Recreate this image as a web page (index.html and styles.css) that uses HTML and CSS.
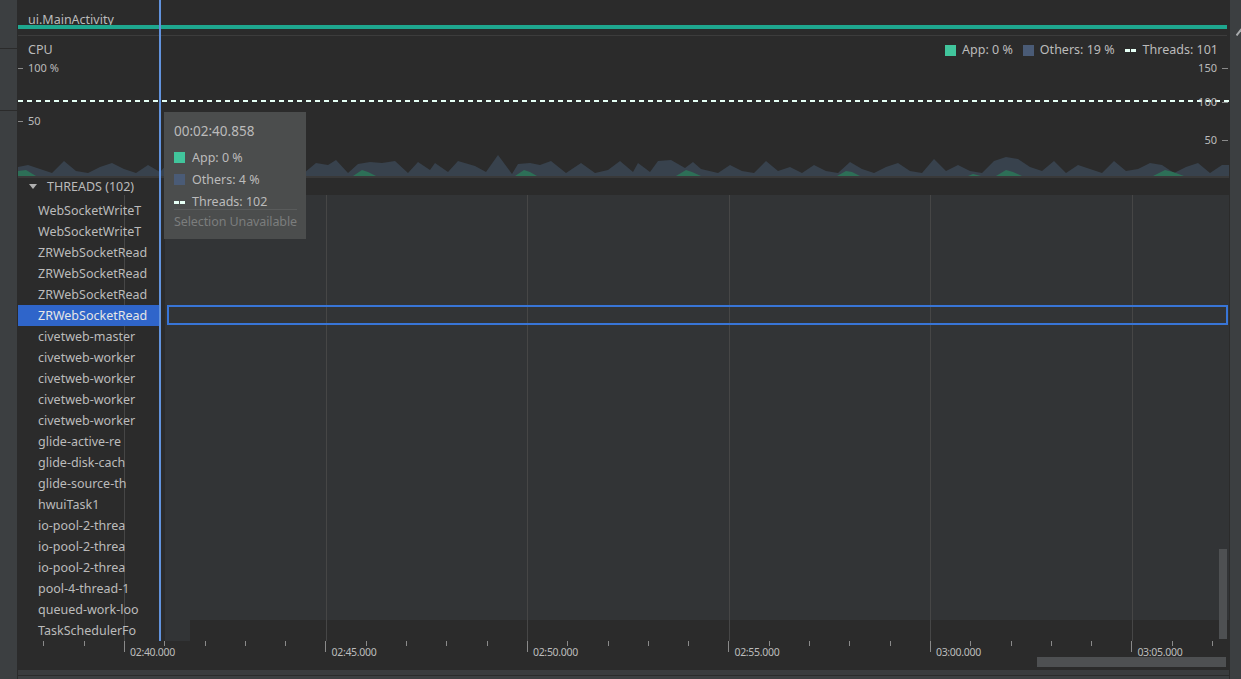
FILE: index.html
```html
<!DOCTYPE html>
<html>
<head>
<meta charset="utf-8">
<link rel="stylesheet" href="styles.css">
</head>
<body>
<div class="app">
  <aside class="strip-left"><div class="sl-a"></div><div class="sl-b"></div></aside>
  <main class="main">
    <div class="title">ui.MainActivity</div>
    <div class="teal"></div>
    <div class="sep"></div>
    <section class="cpu">
      <div class="cpu-head">
        <span>CPU</span>
        <div class="legend">
          <span class="lg"><i class="sw app"></i>App: 0 %</span>
          <span class="lg"><i class="sw others"></i>Others: 19 %</span>
          <span class="lg"><i class="dash"></i>Threads: 101</span>
        </div>
      </div>
      <div class="yl yl-left y100"><i class="tk"></i>100 %</div>
      <div class="yl yl-left y50"><i class="tk"></i>50</div>
      <div class="dashed"></div>
      <div class="yl yl-right r150">150<i class="tk"></i></div>
      <div class="yl yl-right r100">100<i class="tk"></i></div>
      <div class="yl yl-right r50">50<i class="tk"></i></div>
      <svg class="chart" viewBox="0 0 1211 26" preserveAspectRatio="none">
        <polygon fill="#38424d" points="0,26 0,17 10,15 22,19 34,23 46,11 58,21 70,23 82,17 94,13 106,19 118,23 130,15 142,22 152,11 164,21 176,23 190,9 202,21 214,19 226,13 238,23 250,17 262,15 274,20 286,23 298,13 310,15 318,10 330,23 340,14 352,12 364,13 377,11 390,23 400,12 412,20 417,13 430,22 440,11 457,16 468,22 480,5 494,24 500,14 512,13 522,15 533,11 548,23 563,13 577,23 590,20 602,11 615,22 620,13 632,22 640,11 653,10 667,18 675,12 683,19 700,23 712,15 724,21 736,23 748,11 760,21 772,17 784,23 796,15 808,21 820,23 832,12 844,19 856,23 868,17 880,13 892,21 904,23 916,9 928,21 940,15 952,21 964,23 976,11 988,7 1000,9 1012,17 1024,21 1036,11 1048,23 1060,15 1072,19 1084,23 1096,11 1108,21 1120,19 1132,13 1144,15 1156,23 1168,17 1180,13 1192,23 1204,15 1211,15 1211,26"/>
        <g fill="#2d6f57">
          <polygon points="0,26 0,21 8,20 18,26"/>
          <polygon points="335,26 344,20 350,22 358,26"/>
          <polygon points="497,26 506,20 512,22 519,26"/>
          <polygon points="658,26 668,20 674,22 683,26"/>
          <polygon points="819,26 828,21 834,22 842,26"/>
          <polygon points="950,26 955,24 963,26"/>
          <polygon points="978,26 988,20 995,22 1004,26"/>
          <polygon points="1135,26 1147,20 1155,22 1166,26"/>
        </g>
      </svg>
    </section>
    <div class="band"></div>
    <div class="threads-head"><span class="tri"></span>THREADS (102)</div>
    <div class="thread-body">
      <div class="grid">
        <div class="gcell"></div><div class="gcell"></div><div class="gcell"></div>
        <div class="gcell"></div><div class="gcell"></div><div class="gcell"></div>
      </div>
      <ul class="list">
        <li>WebSocketWriteT</li>
        <li>WebSocketWriteT</li>
        <li>ZRWebSocketRead</li>
        <li>ZRWebSocketRead</li>
        <li>ZRWebSocketRead</li>
        <li class="sel">ZRWebSocketRead</li>
        <li>civetweb-master</li>
        <li>civetweb-worker</li>
        <li>civetweb-worker</li>
        <li>civetweb-worker</li>
        <li>civetweb-worker</li>
        <li>glide-active-re</li>
        <li>glide-disk-cach</li>
        <li>glide-source-th</li>
        <li>hwuiTask1</li>
        <li>io-pool-2-threa</li>
        <li>io-pool-2-threa</li>
        <li>io-pool-2-threa</li>
        <li>pool-4-thread-1</li>
        <li>queued-work-loo</li>
        <li>TaskSchedulerFo</li>
      </ul>
      <div class="tracks">
        <div class="track-bg"><div class="sel-outline"></div></div>
        <div class="track-stub"></div>
      </div>
      <div class="vthumb"></div>
    </div>
    <div class="axis">
      <div class="ticks">
        <i class="t"></i><i class="t"></i><i class="t major"><span>02:40.000</span></i><i class="t"></i><i class="t"></i>
        <i class="t"></i><i class="t"></i><i class="t major"><span>02:45.000</span></i><i class="t"></i><i class="t"></i>
        <i class="t"></i><i class="t"></i><i class="t major"><span>02:50.000</span></i><i class="t"></i><i class="t"></i>
        <i class="t"></i><i class="t"></i><i class="t major"><span>02:55.000</span></i><i class="t"></i><i class="t"></i>
        <i class="t"></i><i class="t"></i><i class="t major"><span>03:00.000</span></i><i class="t"></i><i class="t"></i>
        <i class="t"></i><i class="t"></i><i class="t major"><span>03:05.000</span></i><i class="t"></i><i class="t"></i>
      </div>
      <div class="hscroll"><div class="hthumb"></div></div>
    </div>
    <div class="bottom"></div>
    <div class="cursor"></div>
    <div class="tooltip">
      <div class="tt-time">00:02:40.858</div>
      <div class="tt-row"><i class="sw app"></i>App: 0 %</div>
      <div class="tt-row"><i class="sw others"></i>Others: 4 %</div>
      <div class="tt-row tt-threads"><i class="dash"></i>Threads: 102</div>
      <div class="tt-note">Selection Unavailable</div>
    </div>
  </main>
  <aside class="strip-right">
    <svg class="pin" width="6" height="10" viewBox="0 0 6 10"><path d="M0.5 9.5 L5.5 3" stroke="#a9acae" stroke-width="2" fill="none"/></svg>
  </aside>
</div>
</body>
</html>
```

FILE: styles.css
```css
* { box-sizing: border-box; }
html, body { margin: 0; padding: 0; }
body {
  background: #2b2b2b;
  font-family: "Noto Sans", "Open Sans", sans-serif;
  font-size: 12.5px;
  color: #bbbbbb;
  overflow: hidden;
  width: 1241px;
  height: 679px;
}
.app { display: flex; height: 679px; }

.strip-left {
  width: 18px;
  flex: none;
  background: #3c3f41;
  border-right: 1px solid #2b2b2b;
}
.sl-a { height: 49px; border-bottom: 1px solid #2b2b2b; }
.sl-b { height: 62px; border-bottom: 1px solid #2b2b2b; }

.main {
  width: 1211px;
  flex: none;
  position: relative;
  display: flex;
  flex-direction: column;
  overflow: hidden;
  background: #2b2b2b;
}
.main > * { flex: none; }

.title {
  height: 25px;
  padding: 12px 0 0 10px;
  line-height: 16px;
}
.teal { height: 4px; margin-right: 2px; background: #1ea78f; }
.sep { height: 1px; margin-top: 6px; margin-right: 2px; background: #3c3c3c; }

.cpu { position: relative; height: 140px; }
.cpu-head {
  display: flex;
  justify-content: space-between;
  padding: 6px 11px 0 10px;
  line-height: 16px;
}
.legend { display: flex; gap: 10px; }
.lg { display: flex; align-items: center; gap: 6px; }
.lg .dash { margin-right: 1px; }
.sw { display: inline-block; width: 11px; height: 11px; flex: none; }
.sw.app { background: #41c59c; }
.sw.others { background: #4a5b76; }
.dash {
  display: inline-block;
  width: 11px; height: 3px; flex: none;
  background: linear-gradient(to right, #e6fff5 0 5px, transparent 5px 6px, #e6fff5 6px);
}

.yl {
  position: absolute;
  display: flex;
  align-items: center;
  font-size: 11px;
  line-height: 16px;
  z-index: 2;
}
.yl .tk { display: block; width: 5px; height: 1px; background: #8a8a8a; }
.yl-left { left: 0; }
.yl-left .tk { margin-right: 5px; }
.yl-right { right: 1px; }
.yl-right .tk { margin-left: 5px; width: 6px; }
.y100 { top: 24px; }
.y50 { top: 77px; }
.r150 { top: 24px; }
.r100 { top: 58px; }
.r50 { top: 96px; }
.dashed {
  position: absolute;
  left: 0; right: 0; top: 64px;
  height: 2px;
  background: repeating-linear-gradient(to right, #e6fff5 0 5px, transparent 5px 9px);
  z-index: 1;
}
.chart {
  position: absolute;
  left: 0; bottom: 0;
  width: 1211px; height: 26px;
  display: block;
}
.band { height: 2px; background: #393939; }

.threads-head {
  height: 17px;
  display: flex;
  align-items: center;
  padding-left: 11px;
  line-height: 17px;
}
.tri {
  width: 0; height: 0;
  border-left: 4px solid transparent;
  border-right: 4px solid transparent;
  border-top: 5px solid #b0b0b0;
  margin-right: 10px;
}

.thread-body {
  position: relative;
  height: 446px;
  display: grid;
  grid-template-columns: 147px 1fr;
}
.grid {
  position: absolute;
  inset: 0;
  display: flex;
  padding-left: 106px;
  z-index: 1;
  pointer-events: none;
}
.gcell { flex: none; width: 201.5px; height: 100%; border-left: 1px solid #464646; }
.list {
  list-style: none;
  margin: 0;
  padding: 5px 0 0 0;
  position: relative;
  z-index: 2;
}
.list li {
  height: 21px;
  line-height: 22px;
  padding-left: 20px;
  white-space: nowrap;
  overflow: hidden;
}
.list li.sel { background: #2f65ca; color: #e6e6e6; margin-right: 4px; }
.tracks { display: flex; flex-direction: column; }
.track-bg {
  height: 425px;
  background: #323436;
  padding-top: 110px;
}
.sel-outline {
  position: relative;
  z-index: 2;
  height: 20px;
  margin-left: 2px;
  margin-right: 1px;
  border: 2px solid #3875d7;
}
.track-stub { width: 25px; height: 21px; background: #323436; }
.vthumb {
  position: absolute;
  right: 2px; top: 354px;
  width: 8px; height: 90px;
  background: #4e5052;
  z-index: 3;
}

.axis { height: 28px; }
.ticks { display: flex; height: 16px; padding-left: 25.4px; }
.t {
  position: relative;
  flex: none;
  width: 40.3px;
  height: 5px;
  border-left: 1px solid #8a8a8a;
}
.t.major { height: 11px; }
.t span {
  position: absolute;
  left: 5px; top: 4px;
  font-style: normal;
  font-size: 10.5px;
  line-height: 14px;
  letter-spacing: -0.3px;
  white-space: nowrap;
  color: #bdbdbd;
}
.hscroll { height: 10px; }
.hthumb { margin-left: 1019px; width: 189px; height: 10px; background: #4e5052; }
.bottom {
  height: 10px;
  background: linear-gradient(#2b2b2b 0 1px, #3a3c3e 1px 6px, #2b2b2b 6px 7px, #3c3f41 7px);
}

.cursor {
  position: absolute;
  left: 141px; top: 0;
  width: 2px; height: 641px;
  background: #6293dd;
  z-index: 5;
}

.tooltip {
  position: absolute;
  left: 146px; top: 112px;
  width: 142px;
  padding: 10px 9px 7px 10px;
  background: #4b4d4d;
  z-index: 6;
}
.tt-time { font-size: 13.5px; line-height: 19px; margin-bottom: 5px; white-space: nowrap; }
.tt-row { display: flex; align-items: center; gap: 7px; height: 22px; padding-top: 1px; white-space: nowrap; }
.tt-row.tt-threads { height: 20px; padding-top: 5px; line-height: 16px; border-bottom: 1px solid #595b5b; }
.tt-note { line-height: 21px; padding-top: 1px; color: #7b7d7d; white-space: nowrap; letter-spacing: -0.1px; }

.strip-right {
  width: 12px;
  flex: none;
  background: #3c3f41;
  border-left: 1px solid #2b2b2b;
}
.pin { display: block; margin: 26px 0 0 6px; }
```
